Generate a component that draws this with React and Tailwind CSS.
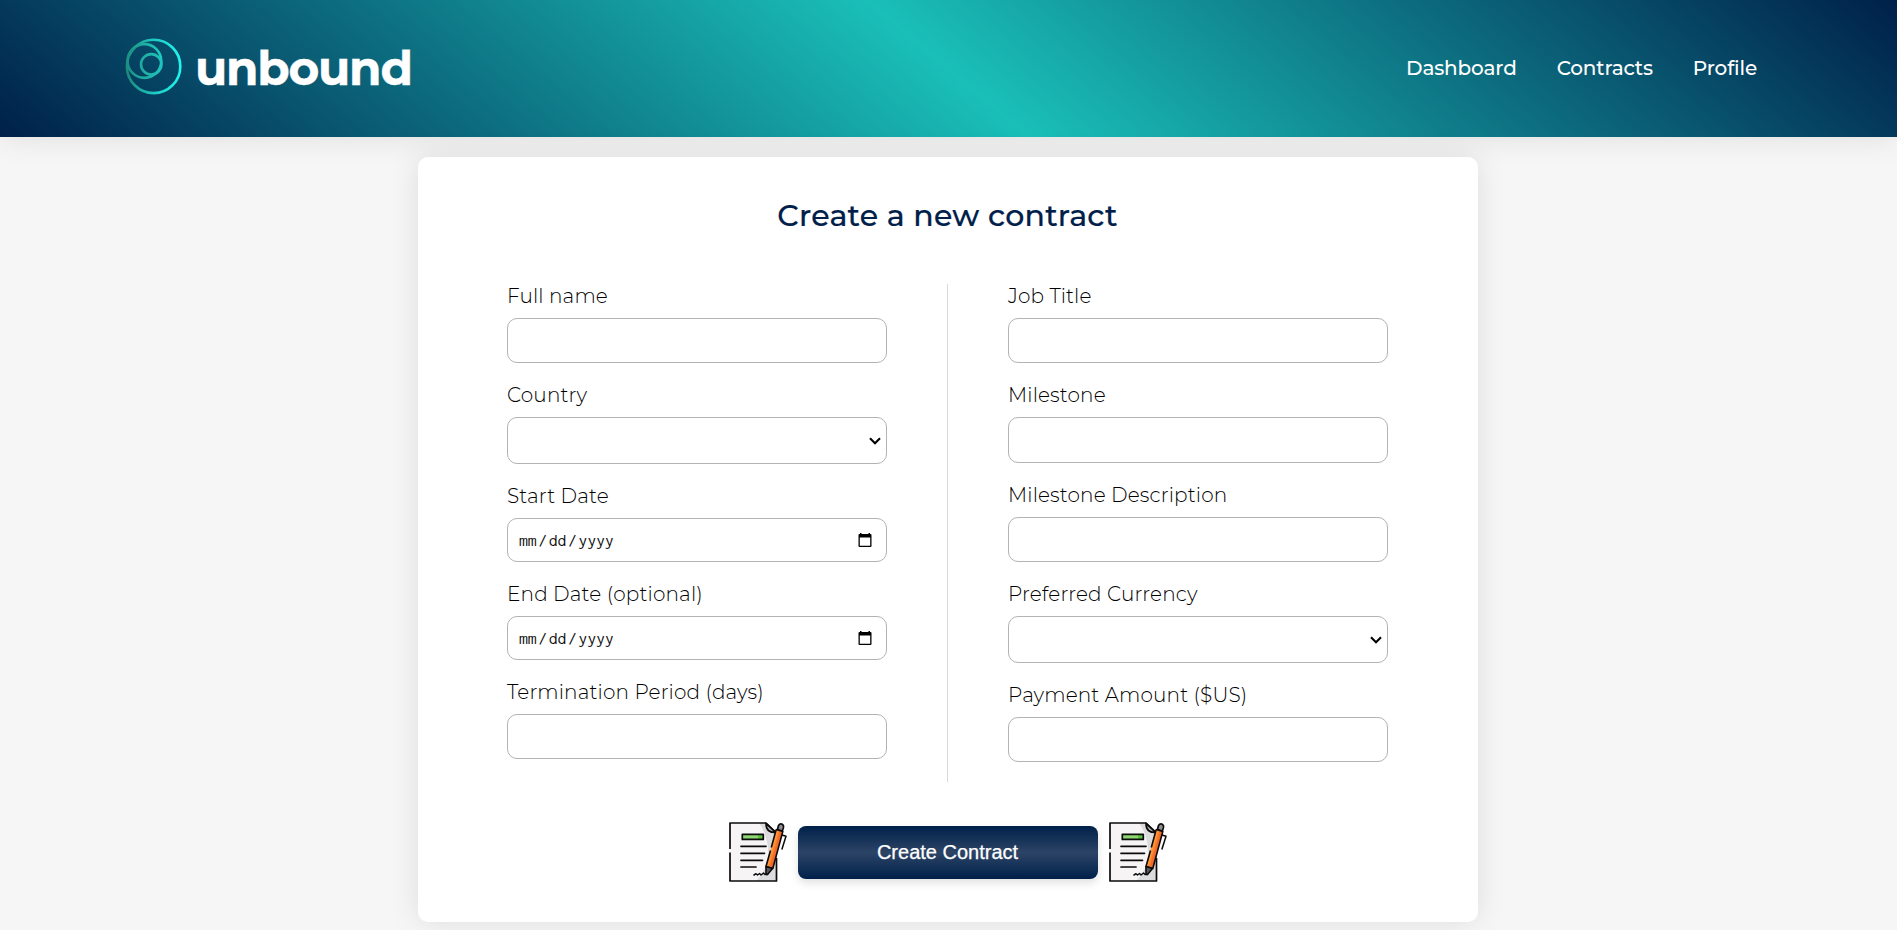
import { useId } from "react";

function Logo() {
  return (
    <svg width="57" height="57" viewBox="0 0 57 57" fill="none" className="shrink-0">
      <defs>
        <linearGradient id="ring-outer" x1="0" y1="0" x2="1" y2="0">
          <stop offset="0" stopColor="#1c8a7c" />
          <stop offset="0.5" stopColor="#1fc8c0" />
          <stop offset="1" stopColor="#1ff5ee" />
        </linearGradient>
        <linearGradient id="ring-mid" x1="0" y1="0" x2="1" y2="0">
          <stop offset="0" stopColor="#1c9184" />
          <stop offset="1" stopColor="#1fcac2" />
        </linearGradient>
        <linearGradient id="ring-inner" x1="0" y1="0" x2="1" y2="0">
          <stop offset="0" stopColor="#1faa9f" />
          <stop offset="1" stopColor="#1fc4bc" />
        </linearGradient>
      </defs>
      <circle cx="28.6" cy="28.4" r="26.7" stroke="url(#ring-outer)" strokeWidth="2.6" />
      <circle cx="19.4" cy="23" r="16.9" stroke="url(#ring-mid)" strokeWidth="2.6" />
      <circle cx="26.2" cy="26.3" r="10.2" stroke="url(#ring-inner)" strokeWidth="2.6" />
    </svg>
  );
}

function ContractIcon() {
  const id = useId();
  return (
    <svg width="60" height="60" viewBox="0 0 60 60" fill="none" className="shrink-0">
      <defs>
        <linearGradient id={id} x1="41" y1="25" x2="48" y2="27" gradientUnits="userSpaceOnUse">
          <stop offset="0.5" stopColor="#ff9d33" />
          <stop offset="0.95" stopColor="#f4682c" />
        </linearGradient>
      </defs>
      <path d="M2 1H38L49 12V59H2Z" fill="#f6f4f5" />
      <path d="M31 1H38L49 12V59H28Q42 45 40 25Q38 10 31 1Z" fill="#dcdcde" />
      <path d="M2 27V1H38L48.500 11.500M2 30.500V59H48.500V36" stroke="#0b0b0b" strokeWidth="1.700" strokeLinejoin="round" />
      <path d="M38 1.500Q38 11 48 10.500Z" fill="#bcbcc0" stroke="#0b0b0b" strokeWidth="1.700" strokeLinejoin="round" />
      <rect x="14.300" y="12.400" width="21" height="5" fill="#8fd672" />
      <path d="M30 12.400H35.300V17.400H30Z" fill="#5cc13c" />
      <rect x="14.300" y="12.400" width="21" height="5" stroke="#0b0b0b" strokeWidth="1.700" strokeLinejoin="round" />
      <path d="M13 24.300H38M13 31.300H36.500M13 38.300H34.500M13 45H28" stroke="#0b0b0b" strokeWidth="1.700" strokeLinecap="round" />
      <path d="M26 53l2-1.300 1.500 1.300 2-1.500 1.500 1.500 2.500-2 1.500 1.500 3-1" stroke="#0b0b0b" strokeWidth="1.500" strokeLinejoin="round" strokeLinecap="round" />
      <path d="M54 13L58 14.200L54 27" stroke="#0b0b0b" strokeWidth="1.500" strokeLinejoin="round" strokeLinecap="round" />
      <path d="M49.500 7.500L50.500 3.500Q52 1.300 54.300 2.300Q56 3.500 55.500 5.500L54.300 9Z" fill="#8f8f93" stroke="#0b0b0b" strokeWidth="1.700" strokeLinejoin="round" />
      <path d="M48.200 7.500L54.800 9.500L44.800 46.500L38 44.500Z" fill={`url(#${id})`} />
      <path d="M48.200 7.500L54.800 9.500L44.800 46.500L38 44.500L42.500 28.500M43.300 25.500L48.200 7.500" stroke="#0b0b0b" strokeWidth="1.600" strokeLinejoin="round" />
      <path d="M38 44.500L44.500 46.500L39.500 52.500Q38 53 38 51Z" fill="#5a5a60" stroke="#0b0b0b" strokeWidth="1.600" strokeLinejoin="round" />
    </svg>
  );
}

function Chevron() {
  return (
    <svg width="12" height="8" viewBox="0 0 12 8" fill="none">
      <path d="M1 1.300L6 6.200L11 1.300" stroke="#000" strokeWidth="2.100" />
    </svg>
  );
}

function CalendarIcon() {
  return (
    <svg width="14" height="14" viewBox="0 0 14 14">
      <path
        fillRule="evenodd"
        d="M2 0H3.500V1H10.500V0H12V1H12.500Q13.500 1 13.500 2V13Q13.500 14 12.500 14H1.500Q0.500 14 0.500 13V2Q0.500 1 1.500 1H2ZM1.800 4.500V12.700H12.200V4.500Z"
      />
    </svg>
  );
}

function Field({ label, height, type }) {
  return (
    <div className="mb-5">
      <div className="mb-2.5 flex h-6 items-center">
        <span className="font-[Montserrat,Inter,sans-serif] text-[20px] leading-6 font-light tracking-[0.15px] whitespace-nowrap text-black">
          {label}
        </span>
      </div>
      <div
        className={`flex w-[380px] items-center rounded-[10px] border border-[#b3b3b3] bg-white ${height} ${
          type === "select" ? "justify-end pr-[5px]" : "justify-between pr-[14px] pl-[11px]"
        }`}
      >
        {type === "select" && <Chevron />}
        {type === "date" && (
          <>
            <span className="flex gap-[1.7px] pt-[1.5px] font-[Inconsolata,'Noto_Sans_Mono','DejaVu_Sans_Mono',monospace] text-[17.6px] leading-none text-[#111]">
              <span>mm</span>
              <span>/</span>
              <span>dd</span>
              <span>/</span>
              <span>yyyy</span>
            </span>
            <CalendarIcon />
          </>
        )}
      </div>
    </div>
  );
}

const LEFT = [
  { label: "Full name", height: "h-[45px]" },
  { label: "Country", height: "h-[47px]", type: "select" },
  { label: "Start Date", height: "h-[44px]", type: "date" },
  { label: "End Date (optional)", height: "h-[44px]", type: "date" },
  { label: "Termination Period (days)", height: "h-[45px]" },
];

const RIGHT = [
  { label: "Job Title", height: "h-[45px]" },
  { label: "Milestone", height: "h-[46px]" },
  { label: "Milestone Description", height: "h-[45px]" },
  { label: "Preferred Currency", height: "h-[47px]", type: "select" },
  { label: "Payment Amount ($US)", height: "h-[45px]" },
];

export default function App() {
  return (
    <div className="h-[930px] overflow-hidden bg-[#f6f6f6]">
      <header className="flex h-[137px] items-center justify-between bg-[linear-gradient(40deg,#00204a,#1abfb8,#00204a)] pr-[140px] pl-[125px] shadow-[0_0_30px_rgba(0,0,0,0.1)]">
        <div className="flex items-center gap-[13px] pb-[5px]">
          <Logo />
          <span className="pt-1 font-[Montserrat,Inter,sans-serif] text-[47px] leading-none font-bold tracking-[-1.25px] text-white [-webkit-text-stroke:0.4px_white]">
            unbound
          </span>
        </div>
        <nav className="flex gap-10 pb-0.5 font-[Montserrat,Inter,sans-serif] text-[20px] font-medium tracking-[-0.15px] text-white">
          <a>Dashboard</a>
          <a>Contracts</a>
          <a>Profile</a>
        </nav>
      </header>
      <main className="mx-auto mt-5 flex h-[765px] w-[1060px] -translate-x-px flex-col items-center rounded-[10px] bg-white shadow-[0_0_30px_rgba(0,0,0,0.1)]">
        <h1 className="mt-10 font-[Montserrat,Inter,sans-serif] text-[30px] leading-[37px] font-medium tracking-[0.28px] text-[#00204a] [-webkit-text-stroke:0.2px_#00204a]">
          Create a new contract
        </h1>
        <div className="mt-[50px] flex h-[498px]">
          <div className="mr-[60px]">
            {LEFT.map((f) => (
              <Field key={f.label} {...f} />
            ))}
          </div>
          <div className="w-px bg-[#d9d9d9]" />
          <div className="ml-[60px]">
            {RIGHT.map((f) => (
              <Field key={f.label} {...f} />
            ))}
          </div>
        </div>
        <div className="mt-10 flex items-center gap-2.5">
          <ContractIcon />
          <button className="h-[53px] w-[300px] rounded-[8px] bg-[linear-gradient(#00204a,#2c4466,#00204a)] font-['Liberation_Sans',Arial,sans-serif] text-[20px] text-white shadow-[0_4px_8px_rgba(0,0,0,0.12)] [-webkit-text-stroke:0.25px_white]">
            Create Contract
          </button>
          <ContractIcon />
        </div>
      </main>
    </div>
  );
}
